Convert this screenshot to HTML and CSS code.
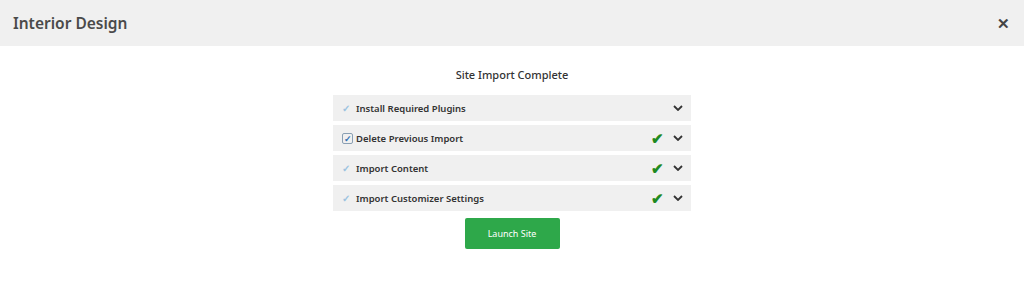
FILE: index.html
```html
<!DOCTYPE html>
<html lang="en">
<head>
    <meta charset="UTF-8">
    <meta name="viewport" content="width=device-width, initial-scale=1.0">
    <title>Interior Design</title>
    <link rel="stylesheet" href="styles.css">
</head>
<body>
    <div class="header">
        <h1>Interior Design</h1>
        <span class="close">&#x2715;</span>
    </div>

    <div class="container">
        <h3>Site Import Complete</h3>

        <div class="step">
            <span class="tick">&#x2713;</span>
            <span class="label">Install Required Plugins</span>
            <span class="done"></span>
            <svg class="chevron" viewBox="0 0 10 6"><path d="M1 1 L5 5 L9 1" /></svg>
        </div>

        <div class="step">
            <span class="box">&#x2713;</span>
            <span class="label">Delete Previous Import</span>
            <span class="done">&#x2714;</span>
            <svg class="chevron" viewBox="0 0 10 6"><path d="M1 1 L5 5 L9 1" /></svg>
        </div>

        <div class="step">
            <span class="tick">&#x2713;</span>
            <span class="label">Import Content</span>
            <span class="done">&#x2714;</span>
            <svg class="chevron" viewBox="0 0 10 6"><path d="M1 1 L5 5 L9 1" /></svg>
        </div>

        <div class="step">
            <span class="tick">&#x2713;</span>
            <span class="label">Import Customizer Settings</span>
            <span class="done">&#x2714;</span>
            <svg class="chevron" viewBox="0 0 10 6"><path d="M1 1 L5 5 L9 1" /></svg>
        </div>

        <button class="launch">Launch Site</button>
    </div>
</body>
</html>
```

FILE: styles.css
```css
body {
    font-family: "Noto Sans", "Open Sans", sans-serif;
    margin: 0;
    background: #fff;
    color: #333;
}
.header {
    height: 46px;
    background-color: #f0f0f0;
    display: flex;
    align-items: center;
    justify-content: space-between;
    padding: 0 14px 0 13px;
}
.header h1 {
    margin: 0;
    font-size: 15.5px;
    font-weight: 600;
    color: #4a4a4a;
}
.close {
    font-size: 15px;
    font-weight: bold;
    color: #444;
}
.container {
    width: 358px;
    margin: 0 auto;
    padding-top: 19px;
    display: flex;
    flex-direction: column;
    align-items: center;
    gap: 4px;
}
.container h3 {
    margin: 0 0 6px;
    font-size: 11px;
    font-weight: 500;
    color: #333;
    line-height: 20px;
}
.step {
    align-self: stretch;
    height: 26px;
    background-color: #f0f0f0;
    display: flex;
    align-items: center;
    padding: 0 8px 0 9px;
    font-size: 9.5px;
    font-weight: 600;
    color: #333;
}
.tick {
    width: 13px;
    color: #9cc3e0;
    font-size: 10px;
}
.box {
    width: 9px;
    height: 9px;
    border: 1px solid #8a9fb3;
    border-radius: 2px;
    font-size: 9px;
    line-height: 9px;
    text-align: center;
    color: #2f6fb0;
    margin-right: 2px;
}
.label {
    flex: 1;
    margin-left: 1px;
}
.done {
    color: #1f8a1f;
    font-size: 15px;
    margin-right: 9px;
}
.chevron {
    width: 10px;
    height: 6px;
    fill: none;
    stroke: #333;
    stroke-width: 1.8;
}
.launch {
    margin-top: 3px;
    width: 95px;
    height: 31px;
    font-family: inherit;
    font-size: 9px;
    background-color: #2ea84a;
    color: #fff;
    border: none;
    border-radius: 2px;
}
```
